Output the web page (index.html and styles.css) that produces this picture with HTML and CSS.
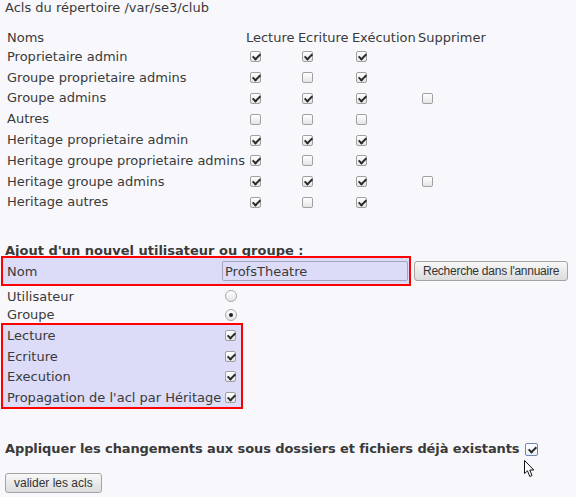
FILE: index.html
```html
<!DOCTYPE html>
<html lang="fr">
<head>
  <meta charset="UTF-8">
  <title>Acls du répertoire</title>
  <link rel="stylesheet" href="styles.css">
</head>
<body>

  <h1>Acls du répertoire /var/se3/club</h1>

  <table class="acls">
    <tr>
      <th class="col-name">Noms</th>
      <th class="col-read">Lecture</th>
      <th class="col-write">Ecriture</th>
      <th class="col-exec">Exécution</th>
      <th class="col-del">Supprimer</th>
    </tr>
    <tr>
      <td>Proprietaire admin</td>
      <td><input type="checkbox" class="cb" checked></td>
      <td><input type="checkbox" class="cb" checked></td>
      <td><input type="checkbox" class="cb" checked></td>
      <td></td>
    </tr>
    <tr>
      <td>Groupe proprietaire admins</td>
      <td><input type="checkbox" class="cb" checked></td>
      <td><input type="checkbox" class="cb"></td>
      <td><input type="checkbox" class="cb" checked></td>
      <td></td>
    </tr>
    <tr>
      <td>Groupe admins</td>
      <td><input type="checkbox" class="cb" checked></td>
      <td><input type="checkbox" class="cb" checked></td>
      <td><input type="checkbox" class="cb" checked></td>
      <td><input type="checkbox" class="cb"></td>
    </tr>
    <tr>
      <td>Autres</td>
      <td><input type="checkbox" class="cb"></td>
      <td><input type="checkbox" class="cb"></td>
      <td><input type="checkbox" class="cb"></td>
      <td></td>
    </tr>
    <tr>
      <td>Heritage proprietaire admin</td>
      <td><input type="checkbox" class="cb" checked></td>
      <td><input type="checkbox" class="cb" checked></td>
      <td><input type="checkbox" class="cb" checked></td>
      <td></td>
    </tr>
    <tr>
      <td>Heritage groupe proprietaire admins</td>
      <td><input type="checkbox" class="cb" checked></td>
      <td><input type="checkbox" class="cb"></td>
      <td><input type="checkbox" class="cb" checked></td>
      <td></td>
    </tr>
    <tr>
      <td>Heritage groupe admins</td>
      <td><input type="checkbox" class="cb" checked></td>
      <td><input type="checkbox" class="cb" checked></td>
      <td><input type="checkbox" class="cb" checked></td>
      <td><input type="checkbox" class="cb"></td>
    </tr>
    <tr>
      <td>Heritage autres</td>
      <td><input type="checkbox" class="cb" checked></td>
      <td><input type="checkbox" class="cb"></td>
      <td><input type="checkbox" class="cb" checked></td>
      <td></td>
    </tr>
  </table>

  <form class="new-acl">
    <div class="section-title">Ajout d'un nouvel utilisateur ou groupe :</div>

    <div class="name-line">
      <div class="hl row name-box">
        <label>Nom</label>
        <input type="text" class="name-input" value="ProfsTheatre">
      </div>
      <button type="button" class="btn btn-search">Recherche dans l'annuaire</button>
    </div>

    <div class="row plain row-user">
      <label>Utilisateur</label>
      <input type="radio" name="type" class="rb">
    </div>
    <div class="row plain row-group">
      <label>Groupe</label>
      <input type="radio" name="type" class="rb" checked>
    </div>

    <div class="hl rights">
      <div class="row"><label>Lecture</label><input type="checkbox" class="cb" checked></div>
      <div class="row"><label>Ecriture</label><input type="checkbox" class="cb" checked></div>
      <div class="row"><label>Execution</label><input type="checkbox" class="cb" checked></div>
      <div class="row"><label>Propagation de l'acl par Héritage</label><input type="checkbox" class="cb" checked></div>
    </div>

    <div class="apply">
      <span>Appliquer les changements aux sous dossiers et fichiers déjà existants</span>
      <span class="apply-check">
        <input type="checkbox" class="cb cb-hover" checked>
        <!-- mouse pointer left on the checkbox -->
        <svg class="pointer" width="11" height="18" viewBox="0 0 11 18">
          <path d="M0.5 0.5 L0.5 13.5 L3.5 10.8 L5.8 16.5 L8 15.5 L5.8 10 L9.8 10 Z" fill="#fff" stroke="#111" stroke-width="1"/>
        </svg>
      </span>
    </div>

    <button type="submit" class="btn btn-submit">valider les acls</button>
  </form>

</body>
</html>
```

FILE: styles.css
```css
body {
  margin: 0;
  padding: 0 5px;
  font-family: "DejaVu Sans", sans-serif;
  font-size: 13px;
  line-height: 15px;
  color: #3a3a3a;
  background-color: #f8f8fc;
}

h1 {
  margin: 0;
  font-size: 13px;
  font-weight: normal;
}

/* table of existing acls */
.acls {
  border-spacing: 0;
  margin-top: 14px;
  white-space: nowrap;
}

.acls th {
  height: 17px;
  padding: 0 0 0 1px;
  font-weight: normal;
  text-align: left;
}

.acls td {
  height: 20.8px;
  padding: 0 0 0 1px;
  line-height: 11px;
}

.acls td:first-child {
  line-height: 15px;
}

.acls .col-name,
.acls td:first-child {
  padding-left: 2px;
}

.col-name { width: 236px; }
.col-read { width: 51px; }
.col-write { width: 53px; }
.col-exec { width: 65px; }
.col-del { width: 70px; }

/* home made checkboxes and radios */
.cb, .rb {
  -webkit-appearance: none;
  appearance: none;
  position: relative;
  box-sizing: border-box;
  margin: 0 0 0 4px;
  vertical-align: middle;
  background: linear-gradient(#ffffff, #e4e4e4);
}

.cb {
  width: 11px;
  height: 11px;
  border: 1px solid #a0a0a0;
  border-radius: 2px;
}

.cb:checked::after {
  content: '';
  position: absolute;
  left: 3px;
  top: 0;
  width: 3px;
  height: 6px;
  border: solid #2a2a2a;
  border-width: 0 2px 2px 0;
  transform: rotate(45deg);
}

.rb {
  width: 12px;
  height: 12px;
  border: 1px solid #a8a8a8;
  border-radius: 50%;
  margin-left: 3px;
}

.rb:checked::after {
  content: '';
  position: absolute;
  left: 3px;
  top: 3px;
  width: 4px;
  height: 4px;
  border-radius: 50%;
  background: #222;
}

/* add a new user or group */
.new-acl {
  margin: 0;
  padding-top: 31px;
}

.section-title {
  font-weight: bold;
}

.row {
  display: grid;
  grid-template-columns: 219px auto;
  align-items: center;
}

.row > * {
  justify-self: start;
}

.row label {
  padding-left: 4px;
}

.hl {
  position: relative;
  border: 2px solid #f00;
  background: #dcdcf8;
}

.name-line {
  display: flex;
  align-items: center;
  margin: -2px 0 0 -4px;
}

.name-box {
  width: 406px;
  height: 26px;
}

.name-input {
  box-sizing: border-box;
  width: 186px;
  height: 20px;
  margin: 0;
  padding: 0 2px;
  border: 1px solid #a4a4bc;
  border-radius: 2px;
  background: #dcdcf8;
  font-family: "DejaVu Sans", sans-serif;
  font-size: 13px;
  color: #3a3a3a;
}

.plain {
  margin-left: -2px;
}

.row-user { height: 20px; }
.row-group { height: 17px; }

.rights {
  width: 238px;
  margin-left: -4px;
}

.rights .row {
  height: 20.5px;
}

.rights .cb {
  margin-left: 3px;
}

.apply {
  margin-top: 32px;
  font-weight: bold;
  letter-spacing: -0.1px;
  white-space: nowrap;
}

.apply-check {
  position: relative;
}

.cb-hover {
  width: 13px;
  height: 13px;
  margin-left: 1px;
  border-color: #7088ae;
  background: linear-gradient(#ffffff, #e9edf6);
}

.cb-hover:checked::after {
  left: 4px;
  top: 1px;
}

.pointer {
  position: absolute;
  left: 0;
  top: 19px;
}

.btn {
  height: 20px;
  padding: 0 8px;
  border: 1px solid #a3a3a3;
  border-radius: 3px;
  background: linear-gradient(#f8f8f8, #dcdcdc);
  font-family: "Liberation Sans", sans-serif;
  font-size: 12px;
  color: #333;
}

.btn-search {
  margin-left: 3px;
  letter-spacing: -0.25px;
}

.btn-submit {
  display: block;
  margin-top: 17px;
}
```
